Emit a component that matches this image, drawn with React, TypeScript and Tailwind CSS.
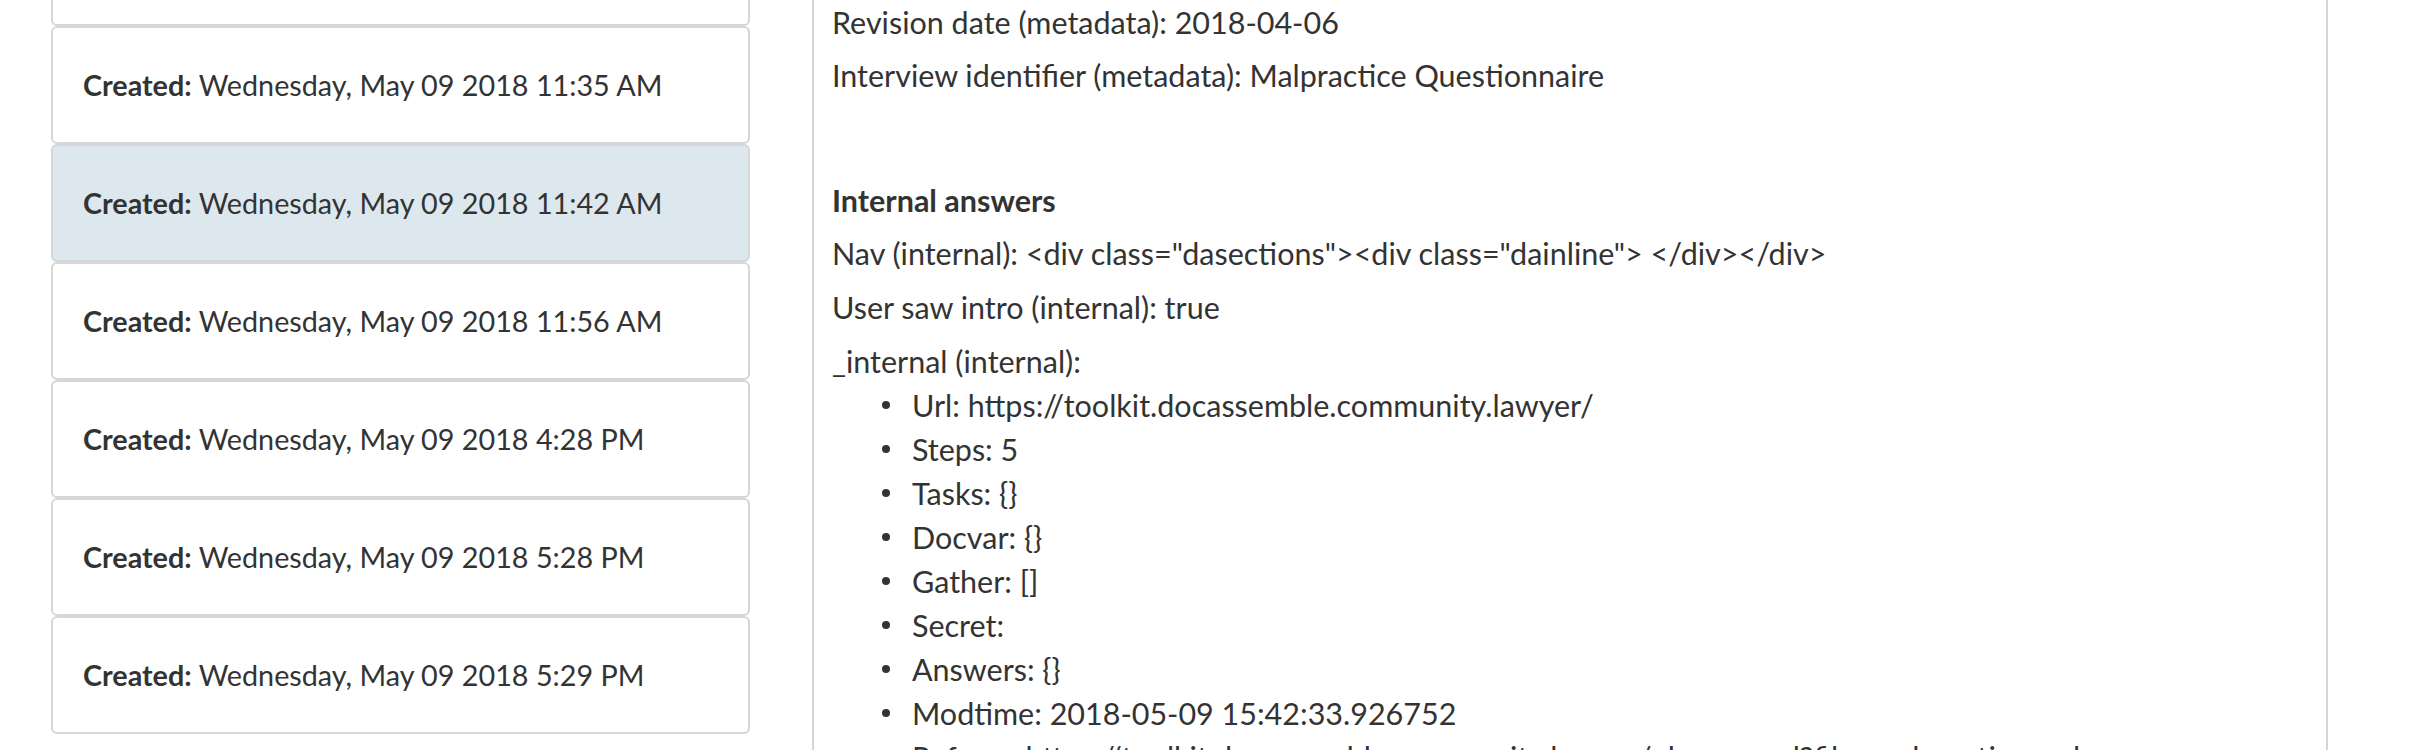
import React from "react";

const cards = [
  "11:29 AM",
  "11:35 AM",
  "11:42 AM",
  "11:56 AM",
  "4:28 PM",
  "5:28 PM",
  "5:29 PM",
];

const items = [
  "Url: https://toolkit.docassemble.community.lawyer/",
  "Steps: 5",
  "Tasks: {}",
  "Docvar: {}",
  "Gather: []",
  "Secret:",
  "Answers: {}",
  "Modtime: 2018-05-09 15:42:33.926752",
  "Referer: https://toolkit.docassemble.community.lawyer/playground?file=malpractice.yml",
];

export default function App() {
  return (
    <div
      className="flex h-[750px] w-[2416px] overflow-hidden bg-white text-[#333333] leading-[44px]"
      style={{ fontFamily: "Lato, 'Open Sans', sans-serif" }}
    >
      <div className="ml-[51px] w-[699px] shrink-0 -mt-[92px] flex flex-col text-[28.75px]">
        {cards.map((t, i) => (
          <div
            key={i}
            className={
              "rounded-[6px] border-2 border-[#d6d6d6] pl-[30px] py-[35px] whitespace-nowrap " +
              (i === 2 ? "bg-[#dde8ee]" : "bg-white")
            }
          >
            <span className="font-bold">Created:</span> Wednesday, May 09 2018 {t}
          </div>
        ))}
      </div>
      <div className="ml-[62px] w-[1516px] shrink-0 border-x-2 border-[#d4d4d4] pl-[18px] pr-[19px] flex flex-col text-[30.5px]">
        <p className="mt-0">Revision date (metadata): 2018-04-06</p>
        <p className="mt-[9px]">Interview identifier (metadata): Malpractice Questionnaire</p>
        <div className="mt-[40px] h-[3px] bg-[#eeeeee]" />
        <p className="mt-[41px] font-bold">Internal answers</p>
        <p className="mt-[9px] whitespace-nowrap">
          Nav (internal): &lt;div class="dasections"&gt;&lt;div class="dainline"&gt; &lt;/div&gt;&lt;/div&gt;
        </p>
        <p className="mt-[10px]">User saw intro (internal): true</p>
        <p className="mt-[10px]">_internal (internal):</p>
        <ul className="pl-[50px]">
          {items.map((t, i) => (
            <li key={i} className="flex items-center whitespace-nowrap">
              <span className="mr-[22px] h-[8px] w-[8px] shrink-0 rounded-full bg-[#333333]" />
              <span>{t}</span>
            </li>
          ))}
        </ul>
      </div>
    </div>
  );
}
